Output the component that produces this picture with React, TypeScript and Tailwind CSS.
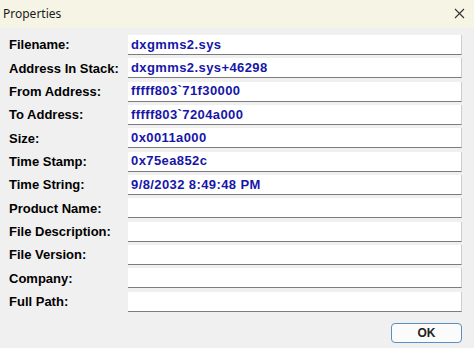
const rows: [string, string][] = [
  ["Filename:", "dxgmms2.sys"],
  ["Address In Stack:", "dxgmms2.sys+46298"],
  ["From Address:", "fffff803`71f30000"],
  ["To Address:", "fffff803`7204a000"],
  ["Size:", "0x0011a000"],
  ["Time Stamp:", "0x75ea852c"],
  ["Time String:", "9/8/2032 8:49:48 PM"],
  ["Product Name:", ""],
  ["File Description:", ""],
  ["File Version:", ""],
  ["Company:", ""],
  ["Full Path:", ""],
];

export default function App() {
  return (
    <div className="w-[474px] h-[348px] flex flex-col bg-[#f0f0f0] font-['Liberation_Sans',Arial,sans-serif] overflow-hidden">
      {/* title bar */}
      <div className="h-[28px] flex items-center justify-between bg-[#f6f5e5] pl-[3px] pr-[9px]">
        <span className="text-[12px] text-[#1a1a1a] font-['Noto_Sans',sans-serif]">Properties</span>
        <svg width="11" height="11" viewBox="0 0 11 11" className="mt-[-2px]">
          <path d="M1 1L10 10M10 1L1 10" stroke="#333" strokeWidth="1.1" />
        </svg>
      </div>

      <div className="flex flex-col gap-[3.33px] pt-[7px] pl-[9px] pr-[12px]">
        {rows.map(([label, value]) => (
          <div key={label} className="flex items-center h-[20px]">
            <div className="w-[119px] text-[13px] font-bold text-black">{label}</div>
            <div className="flex-1 h-[20px] flex items-center bg-white border-b border-r border-b-[#7c7c7c] border-r-[#cdcdcd] pl-[3px]">
              <span className="text-[13px] tracking-[0.4px] font-bold text-[#1616a8]">{value}</span>
            </div>
          </div>
        ))}
      </div>

      <div className="flex justify-end pr-[12px] pt-[11px]">
        <button className="w-[71px] h-[20px] rounded-[4px] border border-[#5b8fc4] bg-[#fbfbfb] text-[12px] font-semibold text-[#222] flex items-center justify-center">
          OK
        </button>
      </div>
    </div>
  );
}
